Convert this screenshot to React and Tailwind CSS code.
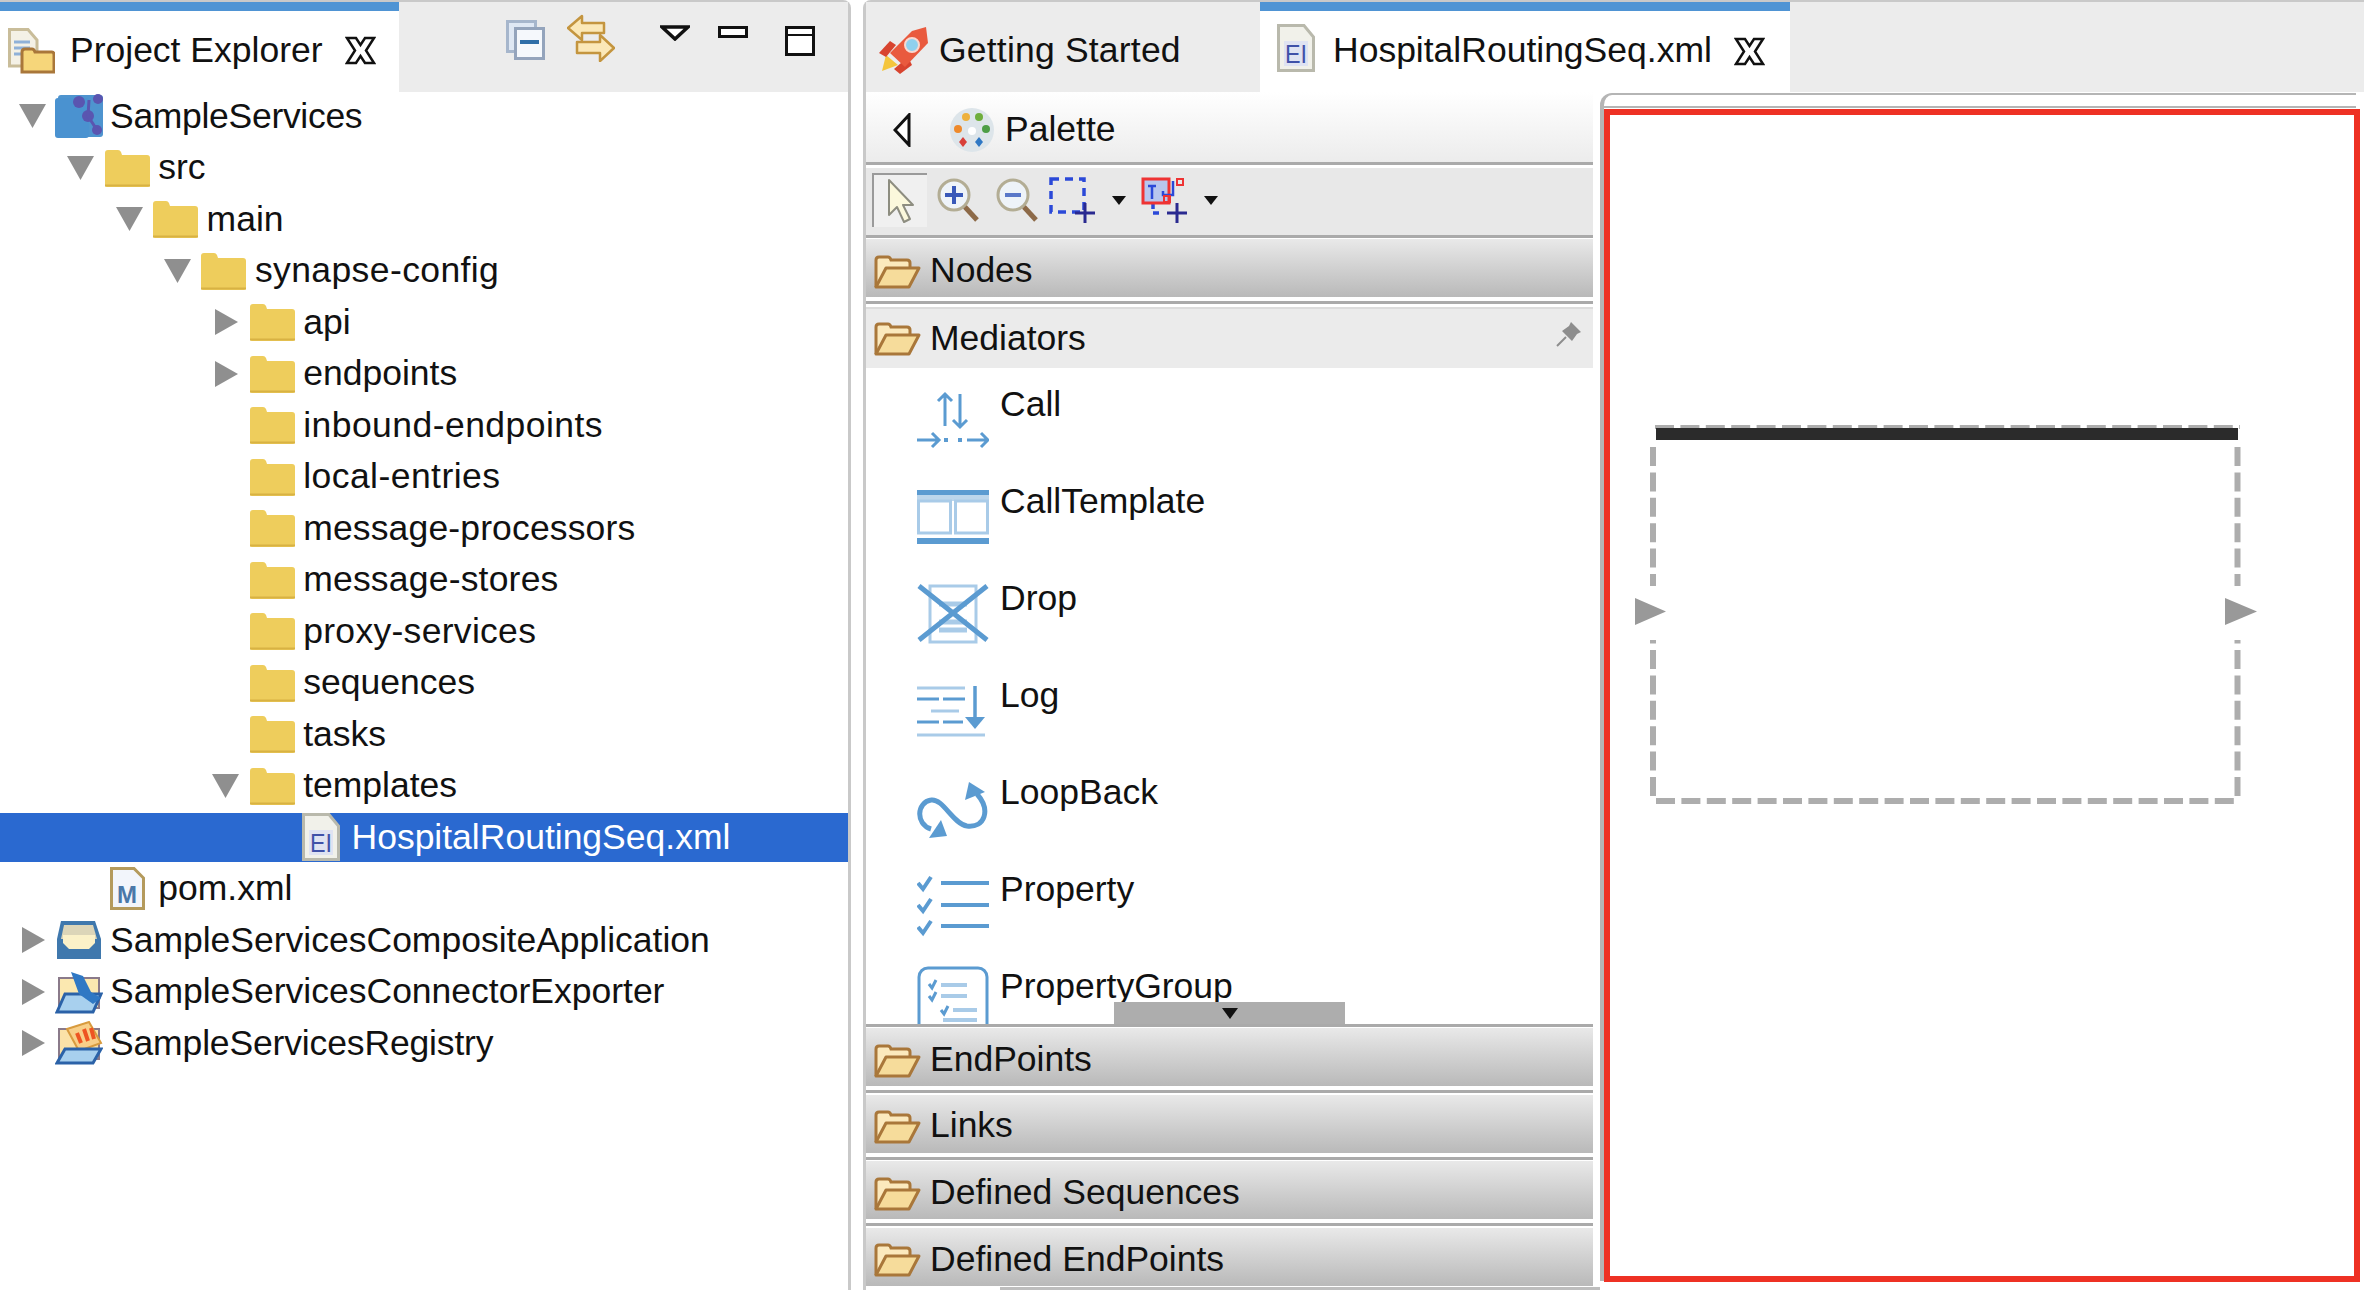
const BLUE = '#5b9bd1'
const LIGHT = '#a9cbe8'

function Close() {
  return (
    <svg width="31" height="29" viewBox="0 0 31 29" className="shrink-0">
      <path d="M2 2H11L15.5 9L20 2H29L21 14.5L29 27H20L15.5 20L11 27H2L10 14.5Z" fill="#fff" stroke="#111" strokeWidth="2.500" />
    </svg>
  )
}

function Folder() {
  return (
    <svg width="45" height="38" viewBox="0 0 45 38">
      <path d="M0 4Q0 1 3 1H13Q15 1 16 3L17 6H42Q45 6 45 9V36Q45 38 43 38H2Q0 38 0 36Z" fill="#eecd5c" />
      <path d="M0 36.500H45" stroke="#d8b243" strokeWidth="2" />
    </svg>
  )
}

function OpenFolder() {
  return (
    <svg width="47" height="34" viewBox="0 0 47 34" className="shrink-0">
      <path d="M2 32V5Q2 2 5 2H14Q16 2 17 5H33Q36 5 36 8V13" fill="#fbe9bd" stroke="#a9773a" strokeWidth="3" />
      <path d="M2 32L12 13H45L35 32Z" fill="#f6dc9b" stroke="#a9773a" strokeWidth="3" strokeLinejoin="round" />
    </svg>
  )
}

function ChevronDown() {
  return (
    <svg width="27" height="24" viewBox="0 0 27 24">
      <polygon points="0,0 27,0 13.500,24" fill="#8f8f8f" />
    </svg>
  )
}

function ChevronRight() {
  return (
    <svg width="23" height="26" viewBox="0 0 23 26">
      <polygon points="0,0 23,13 0,26" fill="#8f8f8f" />
    </svg>
  )
}

function XmlDoc() {
  return (
    <svg width="38" height="48" viewBox="0 0 38 48">
      <path d="M1.500 1.500H27L36.500 13V46.500H1.500Z" fill="#f1f1ea" stroke="#b9b9ac" strokeWidth="3" />
      <rect x="7" y="17" width="24" height="25" fill="#dfe3f2" />
      <text x="8" y="39" fontSize="25" textLength="22" lengthAdjust="spacingAndGlyphs" fontFamily="Liberation Sans" fill="#3f51a8">EI</text>
    </svg>
  )
}

function PomDoc() {
  return (
    <svg width="35" height="43" viewBox="0 0 35 43">
      <path d="M1.500 1.500H24L33.500 11V41.500H1.500Z" fill="#f2f5fb" stroke="#b49a5c" strokeWidth="3" />
      <text x="17" y="36" textAnchor="middle" fontSize="24" fontWeight="700" fontFamily="Liberation Sans" fill="#4a78a8">M</text>
    </svg>
  )
}

function ProjectIcon() {
  return (
    <svg width="48" height="44" viewBox="0 0 48 44">
      <rect x="3" y="1" width="45" height="42" fill="#4e94cf" rx="3" />
      <rect x="0" y="4" width="34" height="40" rx="3" fill="#4a92d0" />
      <circle cx="24" cy="8" r="6" fill="#5a55b0" />
      <circle cx="43" cy="5" r="5" fill="#5a55b0" />
      <circle cx="33" cy="22" r="6" fill="#5a55b0" />
      <circle cx="42" cy="36" r="5" fill="#5a55b0" />
      <path d="M34 6L33 22L42 36" stroke="#5a55b0" strokeWidth="3" fill="none" />
    </svg>
  )
}

function CompositeIcon() {
  return (
    <svg width="48" height="42" viewBox="0 0 48 42">
      <path d="M6 2H40L46 20V40H2V20Z" fill="#3f78ad" />
      <path d="M9 6H38L42 20H6Z" fill="#dcd5b8" />
      <path d="M8 16H40V24L34 30H14L8 24Z" fill="#fbf1c8" />
    </svg>
  )
}

function ExporterIcon() {
  return (
    <svg width="48" height="44" viewBox="0 0 48 44">
      <path d="M4 8H44V38H4Z" fill="#fbe8b0" stroke="#8a7a8a" strokeWidth="2" />
      <path d="M2 42L10 24H46L38 42Z" fill="#a8d0ee" stroke="#2b62a8" strokeWidth="3" />
      <path d="M16 2L28 6L36 22L46 28L38 34L24 24Z" fill="#2f78c4" />
    </svg>
  )
}

function RegistryIcon() {
  return (
    <svg width="48" height="44" viewBox="0 0 48 44">
      <path d="M4 8H44V38H4Z" fill="#fbe2a8" stroke="#8a7a8a" strokeWidth="2" />
      <path d="M12 8L34 1L46 22L24 30Z" fill="#f8cf88" stroke="#d89b3e" strokeWidth="2" />
      <path d="M22 12L26 22M29 8L33 20M36 7L39 18" stroke="#ee5522" strokeWidth="4" />
      <path d="M2 42L10 28H46L38 42Z" fill="#a8d0ee" stroke="#2b62a8" strokeWidth="3" />
    </svg>
  )
}

const TREE = [
  { name: 'SampleServices', depth: 0, arrow: 'down', icon: <ProjectIcon />, text: 'tracking-[-0.3px]' },
  { name: 'src', depth: 1, arrow: 'down', icon: <Folder /> },
  { name: 'main', depth: 2, arrow: 'down', icon: <Folder /> },
  { name: 'synapse-config', depth: 3, arrow: 'down', icon: <Folder />, text: 'tracking-[0.4px]' },
  { name: 'api', depth: 4, arrow: 'right', icon: <Folder /> },
  { name: 'endpoints', depth: 4, arrow: 'right', icon: <Folder /> },
  { name: 'inbound-endpoints', depth: 4, icon: <Folder />, text: 'tracking-[0.45px]' },
  { name: 'local-entries', depth: 4, icon: <Folder />, text: 'tracking-[0.45px]' },
  { name: 'message-processors', depth: 4, icon: <Folder />, text: 'tracking-[0.15px]' },
  { name: 'message-stores', depth: 4, icon: <Folder />, text: 'tracking-[0.2px]' },
  { name: 'proxy-services', depth: 4, icon: <Folder />, text: 'tracking-[0.3px]' },
  { name: 'sequences', depth: 4, icon: <Folder /> },
  { name: 'tasks', depth: 4, icon: <Folder /> },
  { name: 'templates', depth: 4, arrow: 'down', icon: <Folder /> },
  { name: 'HospitalRoutingSeq.xml', depth: 5, icon: <XmlDoc />, selected: true },
  { name: 'pom.xml', depth: 1, icon: <PomDoc /> },
  { name: 'SampleServicesCompositeApplication', depth: 0, arrow: 'right', icon: <CompositeIcon /> },
  { name: 'SampleServicesConnectorExporter', depth: 0, arrow: 'right', icon: <ExporterIcon /> },
  { name: 'SampleServicesRegistry', depth: 0, arrow: 'right', icon: <RegistryIcon />, text: 'tracking-[-0.15px]' },
]

function TreeRow({ row }) {
  return (
    <div
      className={`flex items-center ${row.selected ? 'h-[48.5px] my-[1.5px] bg-[#2a69d0] text-white' : 'h-[51.5px] text-[#111]'}`}
      style={{ paddingLeft: 19 + row.depth * 48.3 }}
    >
      <span className="flex items-center w-[36px] shrink-0">
        {row.arrow === 'down' && <ChevronDown />}
        {row.arrow === 'right' && <span className="ml-[3px] flex"><ChevronRight /></span>}
      </span>
      <span className="flex items-center justify-center w-[48px] shrink-0">{row.icon}</span>
      <span className={`ml-[7px] whitespace-nowrap ${row.text || ''}`}>{row.name}</span>
    </div>
  )
}

function ProjectExplorer() {
  return (
    <div className="w-[851px] h-full shrink-0 flex flex-col border-t-2 border-r-[3px] border-[#c9c9c9] rounded-tr-lg">
      <div className="flex h-[90px] shrink-0">
        <div className="w-[399px] border-t-[9px] border-[#4f94d4] flex items-center pl-[8px] pb-[2px]">
          <svg width="47" height="46" viewBox="0 0 47 46" className="shrink-0">
            <path d="M1.500 1.500H20L29 12V38H1.500Z" fill="#f4f1e6" stroke="#c9bd9a" strokeWidth="3" />
            <path d="M6 14H22M6 20H22M6 26H18" stroke="#8fb1d8" strokeWidth="3" />
            <path d="M14 44V24Q14 21 17 21H24Q26 21 27 24H44Q46 24 46 27V44Z" fill="#f6d67a" stroke="#a9773a" strokeWidth="3" />
          </svg>
          <span className="ml-[15px] whitespace-nowrap text-[#111]">Project Explorer</span>
          <span className="ml-[22px] flex"><Close /></span>
        </div>
        <div className="flex-1 bg-[#ececec] relative">
          <div className="flex items-start pl-[107px] pt-[12px]">
            <svg width="39" height="40" viewBox="0 0 39 40" className="mt-[6px] shrink-0">
              <rect x="1.500" y="1.500" width="28" height="30" fill="#dfe8f4" stroke="#a6b6cc" strokeWidth="3" />
              <rect x="9.500" y="8.500" width="28" height="30" fill="#f5f8fc" stroke="#94a4bc" strokeWidth="3" />
              <path d="M14 22H33" stroke="#2f6ea8" strokeWidth="4" />
            </svg>
            <svg width="48" height="48" viewBox="0 0 48 48" className="ml-[22px] shrink-0">
              <path d="M1 14L15 2V9H37V19H15V26Z" fill="#fbe8b8" stroke="#c4953f" strokeWidth="2.500" strokeLinejoin="round" />
              <path d="M47 34L33 21V28H10V39H33V47Z" fill="#fbe8b8" stroke="#c4953f" strokeWidth="2.500" strokeLinejoin="round" />
            </svg>
            <svg width="30" height="16" viewBox="0 0 30 16" className="ml-[45px] mt-[11px] shrink-0">
              <polygon points="2,2 28,2 15,14" fill="#fff" stroke="#111" strokeWidth="3.500" />
            </svg>
            <svg width="30" height="12" viewBox="0 0 30 12" className="ml-[28px] mt-[12px] shrink-0">
              <rect x="1.500" y="1.500" width="27" height="9" fill="#fff" stroke="#111" strokeWidth="3" />
            </svg>
            <svg width="30" height="30" viewBox="0 0 30 30" className="ml-[37px] mt-[12px] shrink-0">
              <rect x="1.500" y="1.500" width="27" height="27" fill="#fff" stroke="#111" strokeWidth="3" />
              <path d="M0 9H30" stroke="#111" strokeWidth="2" />
            </svg>
          </div>
        </div>
      </div>
      <div className="-mt-[1.5px]">
        {TREE.map((row) => <TreeRow key={row.name} row={row} />)}
      </div>
    </div>
  )
}

function Drawer({ name }) {
  return (
    <div className="h-[66.6px] shrink-0">
      <div className="h-[3px] bg-[#aaa]" />
      <div className="mt-[1.500px] h-[58px] flex items-center pl-[8px] pt-[7px] bg-linear-to-b from-[#e9e9e9] to-[#b9b9b9] text-[#111]">
        <OpenFolder />
        <span className="ml-[9px] -mt-[2px] whitespace-nowrap">{name}</span>
      </div>
    </div>
  )
}

function Icon72({ children }) {
  return (
    <svg width="72" height="72" viewBox="0 0 72 72" fill="none" className="shrink-0">
      {children}
    </svg>
  )
}

const MEDIATORS = [
  {
    name: 'Call',
    icon: (
      <Icon72>
        <g stroke={BLUE} strokeWidth="3">
          <path d="M28 42V10M21 17L28 10L35 17" />
          <path d="M43 10V43M36 36L43 43L50 36" />
          <path d="M0 56H22M15 49L22 56L15 63" />
          <path d="M50 56H71M64 49L71 56L64 63" />
        </g>
        <rect x="27" y="54" width="4" height="4" fill={BLUE} />
        <rect x="41" y="54" width="4" height="4" fill={BLUE} />
      </Icon72>
    ),
  },
  {
    name: 'CallTemplate',
    icon: (
      <Icon72>
        <rect x="0" y="9" width="72" height="5" fill={BLUE} />
        <rect x="0" y="14" width="72" height="6" fill="#bcd6ec" />
        <rect x="1.500" y="20" width="32" height="32" fill="#fff" stroke={LIGHT} strokeWidth="3" />
        <rect x="38.500" y="20" width="32" height="32" fill="#fff" stroke={LIGHT} strokeWidth="3" />
        <rect x="0" y="57" width="72" height="6" fill={BLUE} />
      </Icon72>
    ),
  },
  {
    name: 'Drop',
    icon: (
      <Icon72>
        <rect x="13" y="8" width="46" height="56" stroke={LIGHT} strokeWidth="3" />
        <path d="M22 26H50M22 44H50M22 52H50" stroke={LIGHT} strokeWidth="5" />
        <path d="M2 8L70 62M70 8L2 62" stroke={BLUE} strokeWidth="5" />
      </Icon72>
    ),
  },
  {
    name: 'Log',
    icon: (
      <Icon72>
        <path d="M0 13H48M0 60H68" stroke={LIGHT} strokeWidth="3" />
        <path d="M0 24H22M26 24H48M0 47H22M26 47H46" stroke={BLUE} strokeWidth="3" />
        <path d="M14 36H42" stroke={LIGHT} strokeWidth="3" />
        <path d="M58 11V50" stroke={BLUE} strokeWidth="3.500" />
        <path d="M48 42L58 54L68 42Z" fill={BLUE} />
      </Icon72>
    ),
  },
  {
    name: 'LoopBack',
    icon: (
      <Icon72>
        <path d="M14 57C-2 52 0 30 14 28C26 26 36 52 50 54C68 56 74 38 60 22" stroke={BLUE} strokeWidth="5" />
        <path d="M48 28L52 10L68 20Z" fill={BLUE} />
        <path d="M24 48L12 66L30 64Z" fill={BLUE} />
      </Icon72>
    ),
  },
  {
    name: 'Property',
    icon: (
      <Icon72>
        <g stroke={BLUE} strokeWidth="4">
          <path d="M1 14L6 20L14 8M1 36L6 42L14 30M1 58L6 64L14 52" />
          <path d="M24 14H72M24 36H72M24 57H72" />
        </g>
      </Icon72>
    ),
  },
  {
    name: 'PropertyGroup',
    icon: (
      <Icon72>
        <rect x="2" y="2" width="68" height="90" rx="9" stroke={BLUE} strokeWidth="3" />
        <path d="M12 18L15 22L19 14M12 30L15 34L19 26M24 44L27 48L31 40" stroke={BLUE} strokeWidth="3" />
        <path d="M24 19H50M24 30H50M36 44H60M26 54H60" stroke={LIGHT} strokeWidth="4" />
      </Icon72>
    ),
  },
]

function Palette() {
  return (
    <div className="w-[727px] h-full shrink-0 flex flex-col">
      {/* palette title */}
      <div className="h-[70px] shrink-0 flex items-center pt-[6px] bg-linear-to-b from-white to-[#ececec] text-[#111]">
        <svg width="18" height="34" viewBox="0 0 18 34" className="ml-[27px] shrink-0">
          <polygon points="16,2 16,32 2,17" fill="#fff" stroke="#111" strokeWidth="3" />
        </svg>
        <svg width="46" height="46" viewBox="0 0 46 46" className="ml-[38px] shrink-0">
          <circle cx="23" cy="23" r="22" fill="#dde5ea" />
          <circle cx="17" cy="10" r="4" fill="#eeb13c" />
          <circle cx="30" cy="10" r="4" fill="#6fae3c" />
          <circle cx="9" cy="22" r="4" fill="#ee8a2c" />
          <circle cx="37" cy="22" r="4" fill="#4d9e46" />
          <path d="M14 30L18 35L14 40L10 35Z" fill="#d8403a" />
          <path d="M30 30L34 35L30 40L26 35Z" fill="#2f78c4" />
          <circle cx="23" cy="24" r="4" fill="#fff" />
        </svg>
        <span className="ml-[10px] whitespace-nowrap">Palette</span>
      </div>
      <div className="h-[3px] shrink-0 bg-[#aaa]" />

      {/* tools */}
      <div className="mt-[3px] h-[66.500px] shrink-0 bg-[#e8e8e8] flex items-center pl-[6px] pb-[2px]">
        <div className="w-[55px] h-[54px] shrink-0 bg-[#f0f0f0] border-t-2 border-l-2 border-[#9a9a9a] flex items-center justify-center">
          <svg width="30" height="46" viewBox="0 0 30 46">
            <path d="M3 2V37L11 29L18 44L24 41L17 27L27 27Z" fill="#fbf8dc" stroke="#8d8d80" strokeWidth="2" strokeLinejoin="round" />
          </svg>
        </div>
        <svg width="42" height="44" viewBox="0 0 42 44" fill="none" className="ml-[10px] shrink-0">
          <circle cx="17" cy="17" r="15" fill="#eef3f8" stroke="#b3ad94" strokeWidth="3" />
          <path d="M17 8V26M8 17H26" stroke="#3858b8" strokeWidth="4" />
          <path d="M28 29L40 42" stroke="#8d6a48" strokeWidth="5" />
        </svg>
        <svg width="42" height="44" viewBox="0 0 42 44" fill="none" className="ml-[17px] shrink-0">
          <circle cx="17" cy="17" r="15" fill="#eef3f8" stroke="#b3ad94" strokeWidth="3" />
          <path d="M9 17H25" stroke="#5a78c8" strokeWidth="4" />
          <path d="M28 29L40 42" stroke="#8d6a48" strokeWidth="5" />
        </svg>
        <svg width="46" height="46" viewBox="0 0 46 46" fill="none" className="ml-[11px] shrink-0">
          <rect x="2" y="2" width="33" height="33" stroke="#2b49d8" strokeWidth="3.500" strokeDasharray="8 6" />
          <path d="M36 26V46M26 36H46" stroke="#2a2a90" strokeWidth="3" />
        </svg>
        <svg width="14" height="9" viewBox="0 0 14 9" className="ml-[17px] shrink-0">
          <polygon points="0,0 14,0 7,9" fill="#111" />
        </svg>
        <svg width="46" height="46" viewBox="0 0 46 46" fill="none" className="ml-[15px] shrink-0">
          <path d="M12 26V36H20" stroke="#2b49d8" strokeWidth="3.500" strokeDasharray="6 4" />
          <rect x="2" y="2" width="26" height="24" fill="#b8c6ee" stroke="#ee3333" strokeWidth="3" />
          <path d="M11 9V22M7 9H15M32 4V18H22V14" stroke="#2b49d8" strokeWidth="2.500" />
          <rect x="36" y="2" width="6" height="6" stroke="#ee3333" strokeWidth="2" />
          <rect x="23" y="19" width="6" height="6" stroke="#ee3333" strokeWidth="2" />
          <path d="M36 26V46M26 36H46" stroke="#2a2a90" strokeWidth="3" />
        </svg>
        <svg width="14" height="9" viewBox="0 0 14 9" className="ml-[17px] shrink-0">
          <polygon points="0,0 14,0 7,9" fill="#111" />
        </svg>
      </div>

      <Drawer name="Nodes" />

      {/* open drawer */}
      <div className="shrink-0">
        <div className="h-[3px] bg-[#aaa]" />
        <div className="mt-[3px] h-[2px] bg-[#dcdcdc]" />
        <div className="h-[59px] flex items-center pl-[8px] pt-[1px] bg-[#ebebeb] text-[#111] relative">
          <OpenFolder />
          <span className="ml-[9px] whitespace-nowrap">Mediators</span>
          <svg width="26" height="26" viewBox="0 0 26 26" className="absolute right-[11px] top-[12px]">
            <path d="M15 1L25 11L21 13L16 20L6 10L13 5Z" fill="#8d8d8d" />
            <path d="M10 16L1 25" stroke="#8d8d8d" strokeWidth="2" />
          </svg>
        </div>
      </div>

      {/* drawer content */}
      <div className="relative flex-1 min-h-0 overflow-hidden bg-white pt-[4px] text-[#111]">
        {MEDIATORS.map((m) => (
          <div key={m.name} className="h-[97px] flex items-start gap-[11px] pl-[51px] pt-[12px]">
            {m.icon}
            <span className="leading-[40px] whitespace-nowrap">{m.name}</span>
          </div>
        ))}
        <div className="absolute bottom-0 left-[248px] w-[231px] h-[22px] bg-[#adadad] flex justify-center pt-[6px]">
          <svg width="16" height="11" viewBox="0 0 16 11">
            <polygon points="0,0 16,0 8,11" fill="#111" />
          </svg>
        </div>
      </div>

      <Drawer name="EndPoints" />
      <Drawer name="Links" />
      <Drawer name="Defined Sequences" />
      <Drawer name="Defined EndPoints" />
    </div>
  )
}

function Editor() {
  return (
    <div className="flex-1 min-w-0 h-full flex flex-col ml-[7px] mr-[4px] pt-[1px] pb-[9px]">
      <div className="h-[15px] shrink-0 mr-[4px] border-l-4 border-t-2 border-b-2 border-[#b5b5b5] rounded-tl-xl" />
      <div className="flex-1 min-h-0 border-l-4 border-[#b5b5b5]">
        <div className="h-full mt-[1px] border-[6px] border-[#ee3124] bg-white">
          {/* sequence shape */}
          <svg width="640" height="400" viewBox="1630 415 640 400" fill="none" className="ml-[20px] mt-[300px]">
            <g stroke="#adadad">
              <path d="M1655 427H2240" strokeWidth="4" strokeDasharray="19 6.400" />
              <path d="M1653 447V586M2237.500 447V586" strokeWidth="6" strokeDasharray="19 6.400" />
              <path d="M1653 640V797M2237.500 640V797" strokeWidth="6" strokeDasharray="19 6.400" strokeDashoffset="15.400" />
              <path d="M1656 801H2235" strokeWidth="6" strokeDasharray="19 6.400" />
            </g>
            <rect x="1656" y="428" width="582" height="12" fill="#2b2b2b" />
            <polygon points="1635,598 1666,611.500 1635,625" fill="#999" />
            <polygon points="2225,598 2257,611.500 2225,625" fill="#999" />
          </svg>
        </div>
      </div>
    </div>
  )
}

function EditorArea() {
  return (
    <div className="flex-1 min-w-0 h-full flex flex-col ml-[12px] border-t-2 border-l-[3px] border-[#c9c9c9] rounded-tl-lg">
      <div className="flex h-[90px] shrink-0">
        <div className="w-[394px] bg-[#ececec] flex items-center pl-[12px] pt-[9px] pb-[1px]">
          <svg width="50" height="48" viewBox="0 0 50 48" className="shrink-0">
            <path d="M4 44L8 28L20 38Z" fill="#f4c53c" />
            <path d="M1 26L12 14L18 18L8 30Z" fill="#d8442f" />
            <path d="M16 42L30 30L34 38L22 47Z" fill="#d8442f" />
            <path d="M48 0L50 16L27 40L12 26L34 4Z" fill="#e95a3e" />
            <circle cx="34" cy="18" r="7" fill="#8fd0ee" stroke="#f8d8d0" strokeWidth="2" />
          </svg>
          <span className="ml-[11px] whitespace-nowrap text-[#111] tracking-[0.2px]">Getting Started</span>
        </div>
        <div className="w-[530px] border-t-[9px] border-[#4f94d4] flex items-center pl-[17px] pb-[1px]">
          <span className="flex -mt-[6px]"><XmlDoc /></span>
          <span className="ml-[18px] whitespace-nowrap text-[#111]">HospitalRoutingSeq.xml</span>
          <span className="ml-[22px] flex"><Close /></span>
        </div>
        <div className="flex-1 bg-[#ececec]" />
      </div>
      <div className="flex-1 min-h-0 flex">
        <Palette />
        <Editor />
      </div>
    </div>
  )
}

export default function App() {
  return (
    <div className="w-[2364px] h-[1290px] flex bg-white overflow-hidden relative font-['Liberation_Sans',sans-serif] text-[35.5px] leading-none">
      <ProjectExplorer />
      <EditorArea />
      <div className="absolute left-[1000px] right-[764px] bottom-0 h-[3px] bg-[#bdbdbd]" />
    </div>
  )
}
